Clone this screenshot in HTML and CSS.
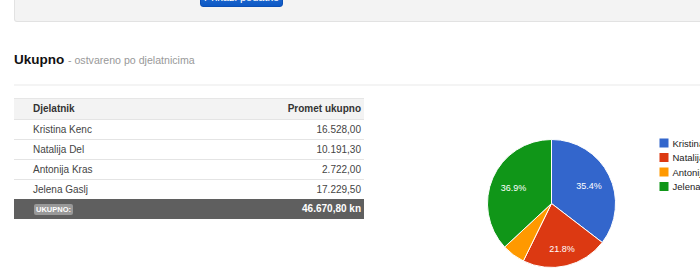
FILE: index.html
```html
<!DOCTYPE html>
<html lang="hr">

<head>
  <meta charset="UTF-8" />
  <meta name="viewport" content="width=device-width, initial-scale=1.0">
  <title>Ukupno - ostvareno po djelatnicima</title>
  <link rel="stylesheet" href="styles.css">
</head>

<body>
  <!-- Filter panel (scrolled mostly out of view) -->
  <div class="filter-panel">
    <button class="btn-primary" type="button">Prikaži podatke</button>
  </div>

  <div class="report">
    <h2 class="report-title">Ukupno <small>- ostvareno po djelatnicima</small></h2>
    <div class="divider"></div>

    <div class="report-body">
      <table class="summary-table">
        <thead>
          <tr>
            <th>Djelatnik</th>
            <th class="num">Promet ukupno</th>
          </tr>
        </thead>
        <tbody>
          <tr>
            <td>Kristina Kenc</td>
            <td class="num">16.528,00</td>
          </tr>
          <tr>
            <td>Natalija Del</td>
            <td class="num">10.191,30</td>
          </tr>
          <tr>
            <td>Antonija Kras</td>
            <td class="num">2.722,00</td>
          </tr>
          <tr>
            <td>Jelena Gaslj</td>
            <td class="num">17.229,50</td>
          </tr>
        </tbody>
        <tfoot>
          <tr>
            <td><span class="label">UKUPNO:</span></td>
            <td class="num">46.670,80 kn</td>
          </tr>
        </tfoot>
      </table>

      <svg class="chart" viewBox="364 98 400 179" width="400" height="179">
        <g stroke="#fff" stroke-width="1">
          <path fill="#3366cc" d="M551.5,203.5 L551.5,139.5 A64,64 0 0 1 602.28,242.46 Z" />
          <path fill="#dc3912" d="M551.5,203.5 L602.28,242.46 A64,64 0 0 1 523.35,260.97 Z" />
          <path fill="#ff9900" d="M551.5,203.5 L523.35,260.97 A64,64 0 0 1 504.62,247.07 Z" />
          <path fill="#109618" d="M551.5,203.5 L504.62,247.07 A64,64 0 0 1 551.5,139.5 Z" />
        </g>
        <g class="slice-label" text-anchor="middle">
          <text x="589" y="188.5">35.4%</text>
          <text x="562" y="252">21.8%</text>
          <text x="513.5" y="190.5">36.9%</text>
        </g>
        <g class="legend">
          <rect x="659.5" y="138.5" width="9" height="9" fill="#3366cc" />
          <text x="672.5" y="146.5">Kristina Kenc</text>
          <rect x="659.5" y="153" width="9" height="9" fill="#dc3912" />
          <text x="672.5" y="161">Natalija Del</text>
          <rect x="659.5" y="167.5" width="9" height="9" fill="#ff9900" />
          <text x="672.5" y="175.5">Antonija Kras</text>
          <rect x="659.5" y="182" width="9" height="9" fill="#109618" />
          <text x="672.5" y="190">Jelena Gaslj</text>
        </g>
      </svg>
    </div>
  </div>
</body>

</html>
```

FILE: styles.css
```css
* {
  box-sizing: border-box;
}

body {
  margin: 0;
  font-family: 'Liberation Sans', Arial, sans-serif;
  color: #333;
  background: #fff;
  overflow: hidden;
}

.filter-panel {
  display: flex;
  align-items: flex-start;
  margin-left: 14px;
  margin-right: -20px;
  height: 22px;
  padding-left: 185px;
  background: #f3f3f3;
  border: 1px solid #e2e2e2;
  border-top: none;
  border-radius: 0 0 0 3px;
}

.btn-primary {
  display: block;
  width: 83px;
  height: 20px;
  margin-top: -13px;
  padding: 0;
  border: 1px solid #0a4fb5;
  border-radius: 3px;
  background: linear-gradient(#2f78dc, #0d58c4);
  color: #fff;
  font-family: inherit;
  font-size: 11px;
  line-height: 12px;
}

.report {
  padding-left: 14px;
}

.report-title {
  margin: 30px 0 0;
  font-size: 13.5px;
  line-height: 16px;
  font-weight: 700;
  color: #111;
}

.report-title small {
  font-size: 10.6px;
  font-weight: 400;
  color: #999;
}

.divider {
  height: 2px;
  margin-top: 16px;
  background: #f4f4f4;
}

.report-body {
  display: flex;
  margin-top: 12px;
}

.summary-table {
  width: 350px;
  flex: none;
  border-collapse: separate;
  border-spacing: 0;
  font-size: 10px;
  align-self: flex-start;
}

.summary-table th,
.summary-table td {
  padding: 0 3px 0 19px;
  text-align: left;
  white-space: nowrap;
}

.summary-table .num {
  text-align: right;
}

.summary-table th {
  line-height: 20px;
  background: #f3f3f3;
  border-top: 1px solid #e6e6e6;
  font-weight: 700;
  color: #333;
}

.summary-table tbody td {
  line-height: 19px;
  border-top: 1px solid #e4e4e4;
  color: #444;
}

.summary-table tfoot td {
  line-height: 20px;
  background: #5f5f5f;
  color: #fff;
  font-weight: 700;
}

.label {
  display: inline-block;
  margin-left: 1px;
  padding: 0 2px;
  background: #999;
  border-radius: 2px;
  font-size: 7.5px;
  line-height: 11px;
  vertical-align: middle;
}

.chart {
  display: block;
  flex: none;
  font-family: 'Liberation Sans', Arial, sans-serif;
}

.slice-label text {
  fill: #fff;
  font-size: 9px;
}

.legend text {
  fill: #222;
  font-size: 9.5px;
}
```
